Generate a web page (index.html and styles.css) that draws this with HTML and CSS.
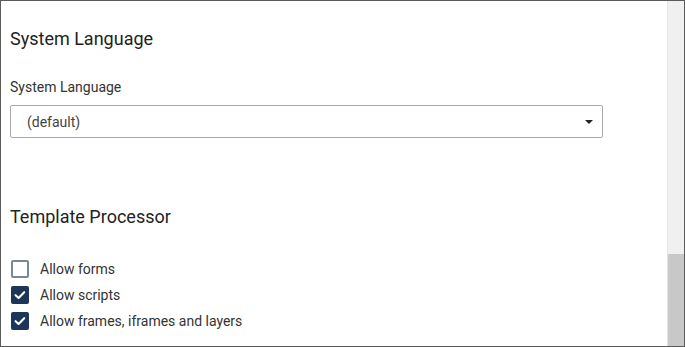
FILE: index.html
```html
<!DOCTYPE html>
<html>
<head>
<meta charset="utf-8">
<link rel="stylesheet" href="styles.css">
</head>
<body>
<div class="frame">
  <div class="content">
    <h2 class="section-title first">System Language</h2>
    <div class="field-label">System Language</div>
    <div class="select">
      <span class="select-value">(default)</span>
      <span class="select-arrow"></span>
    </div>
    <h2 class="section-title second">Template Processor</h2>
    <div class="checks">
      <label class="check-row">
        <span class="box"></span>
        <span class="check-text">Allow forms</span>
      </label>
      <label class="check-row">
        <span class="box checked"><svg viewBox="0 0 18 18" width="18" height="18"><path d="M4.6 9.2 L7.6 12 L13.2 6.2" fill="none" stroke="#fff" stroke-width="2.1" stroke-linecap="round" stroke-linejoin="round"/></svg></span>
        <span class="check-text">Allow scripts</span>
      </label>
      <label class="check-row">
        <span class="box checked"><svg viewBox="0 0 18 18" width="18" height="18"><path d="M4.6 9.2 L7.6 12 L13.2 6.2" fill="none" stroke="#fff" stroke-width="2.1" stroke-linecap="round" stroke-linejoin="round"/></svg></span>
        <span class="check-text">Allow frames, iframes and layers</span>
      </label>
    </div>
  </div>
  <div class="scrollbar">
    <div class="thumb"></div>
  </div>
</div>
</body>
</html>
```
FILE: styles.css
```css
html, body {
  margin: 0;
  padding: 0;
  background: #fff;
}
body {
  font-family: Roboto, "Liberation Sans", sans-serif;
}
.frame {
  box-sizing: border-box;
  width: 685px;
  height: 347px;
  border: 1px solid #5a5a5a;
  display: flex;
  overflow: hidden;
}
.content {
  flex: 1;
  padding: 26px 0 0 9px;
}
.section-title {
  margin: 0;
  font-size: 18px;
  line-height: 24px;
  font-weight: 400;
  color: #222;
}
.field-label {
  margin-top: 26px;
  font-size: 14px;
  line-height: 20px;
  color: #333;
}
.select {
  margin-top: 8px;
  box-sizing: border-box;
  width: 593px;
  height: 33px;
  border: 1px solid #aaa;
  border-radius: 2px;
  display: flex;
  align-items: center;
  justify-content: space-between;
  padding: 0 9px 0 16px;
}
.select-value {
  font-size: 14px;
  color: #444;
}
.select-arrow {
  width: 0;
  height: 0;
  border-left: 4px solid transparent;
  border-right: 4px solid transparent;
  border-top: 4px solid #222;
  margin-top: 1px;
}
.section-title.second {
  margin-top: 67px;
}
.checks {
  margin-top: 31px;
  display: flex;
  flex-direction: column;
  gap: 8px;
}
.check-row {
  display: flex;
  align-items: center;
  height: 18px;
  padding-left: 1px;
}
.box {
  box-sizing: border-box;
  width: 18px;
  height: 18px;
  border: 2px solid #7a879b;
  border-radius: 2px;
  display: flex;
  align-items: center;
  justify-content: center;
}
.box.checked {
  border: none;
  background: #1e355a;
}
.check-text {
  margin-left: 11px;
  font-size: 14px;
  color: #333;
}
.scrollbar {
  width: 16px;
  background: #f0f0f0;
  border-left: 1px solid #e6e6e6;
  display: flex;
  flex-direction: column;
  justify-content: flex-end;
}
.thumb {
  height: 92px;
  background: #c8c8c8;
}
```
